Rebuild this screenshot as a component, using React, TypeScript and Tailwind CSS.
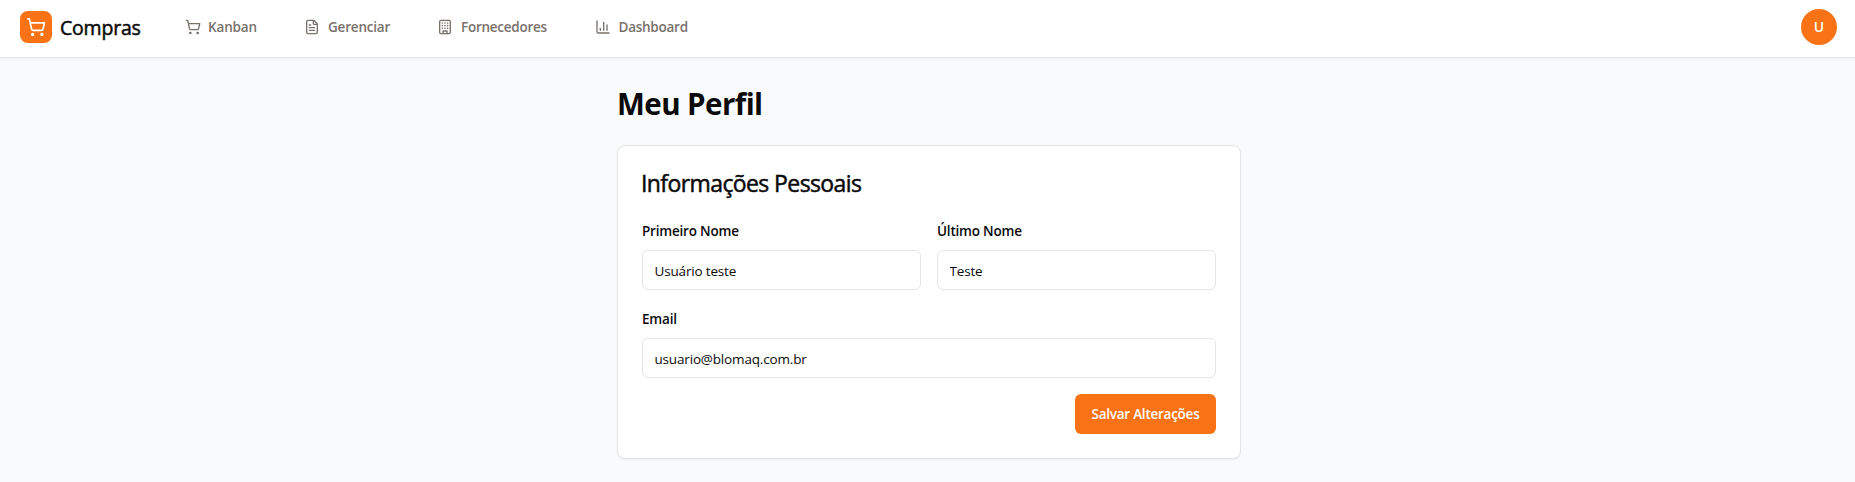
import { ChartColumn, FileText, ShoppingCart } from "lucide-react";

function Building({ size = 16, className = "" }: { size?: number | string; className?: string }) {
  return (
    <svg width={size} height={size} viewBox="0 0 24 24" fill="none" stroke="currentColor" strokeWidth="2" strokeLinecap="round" strokeLinejoin="round" className={className}>
      <rect width="16" height="20" x="4" y="2" rx="2" ry="2" />
      <path d="M9 22v-4h6v4" />
      <g strokeWidth="2.4">
        <path d="M8 6h.01" />
        <path d="M16 6h.01" />
        <path d="M12 6h.01" />
        <path d="M12 10h.01" />
        <path d="M12 14h.01" />
        <path d="M16 10h.01" />
        <path d="M16 14h.01" />
        <path d="M8 10h.01" />
        <path d="M8 14h.01" />
      </g>
    </svg>
  );
}

const nav = [
  { label: "Kanban", Icon: ShoppingCart, width: "w-[119px]", gap: "gap-[7px]", text: "tracking-[-0.15px]" },
  { label: "Gerenciar", Icon: FileText, width: "w-[133px]", gap: "gap-2", text: "tracking-[-0.2px]" },
  { label: "Fornecedores", Icon: Building, width: "w-[158px]", gap: "gap-2", text: "tracking-[-0.25px]" },
  { label: "Dashboard", Icon: ChartColumn, width: "w-[119px]", gap: "gap-[7.5px]", text: "tracking-[-0.25px]" },
];

function Field({ label, value }: { label: string; value: string }) {
  return (
    <div>
      <label className="block h-6 text-[13.5px] leading-[26px] font-semibold tracking-[-0.2px]">{label}</label>
      <input
        defaultValue={value}
        className="mt-2 block h-10 w-full rounded-md border border-[#e5e5e5] bg-white px-[11.5px] pt-px text-[13.5px] tracking-[-0.17px] outline-none"
      />
    </div>
  );
}

export default function App() {
  return (
    <div className="flex h-[482px] flex-col bg-[#f9fafb] font-['Open_Sans','Noto_Sans',sans-serif] text-[#0a0a0a]">
      <header className="flex h-[58px] shrink-0 items-center border-b border-[#e5e5e5] bg-white pr-[18px] pb-[3px] pl-5 shadow-[0_1px_2px_0_rgb(0_0_0/0.05)]">
        <div className="flex w-[165px] items-center gap-2">
          <div className="flex size-8 items-center justify-center rounded-lg bg-[#f97316] text-white">
            <ShoppingCart size={20} />
          </div>
          <span className="pt-0.5 text-[19.5px] font-medium tracking-[-0.2px] [-webkit-text-stroke:0.5px]">Compras</span>
        </div>
        <nav className="flex flex-1">
          {nav.map(({ label, Icon, width, gap, text }) => (
            <a key={label} className={`flex items-center text-[#78716c] ${gap} ${width}`}>
              <Icon size={16} className="shrink-0" />
              <span className={`text-[13.5px] leading-5 font-semibold ${text}`}>{label}</span>
            </a>
          ))}
        </nav>
        <div className="flex size-9 items-center justify-center rounded-full bg-[#f97316] text-sm font-semibold text-white">U</div>
      </header>
      <main className="ml-[617px] w-[624px] pt-[27px]">
        <h1 className="mb-6 h-9 text-[29.5px] leading-[38px] font-bold tracking-[-0.55px]">Meu Perfil</h1>
        <section className="h-[314px] rounded-lg border border-[#e5e5e5] bg-white p-6 shadow-[0_1px_2px_0_rgb(0_0_0/0.05)]">
          <h2 className="-ml-px h-6 text-[23px] leading-[26px] font-medium tracking-[-0.6px] [-webkit-text-stroke:0.5px]">Informações Pessoais</h2>
          <form className="mt-6 flex flex-col gap-4">
            <div className="grid grid-cols-2 gap-4">
              <Field label="Primeiro Nome" value="Usuário teste" />
              <Field label="Último Nome" value="Teste" />
            </div>
            <Field label="Email" value="usuario@blomaq.com.br" />
            <button type="button" className="h-10 w-[141px] self-end rounded-md bg-[#f97316] text-[13.5px] font-semibold tracking-[-0.25px] whitespace-nowrap text-white">
              Salvar Alterações
            </button>
          </form>
        </section>
      </main>
    </div>
  );
}
